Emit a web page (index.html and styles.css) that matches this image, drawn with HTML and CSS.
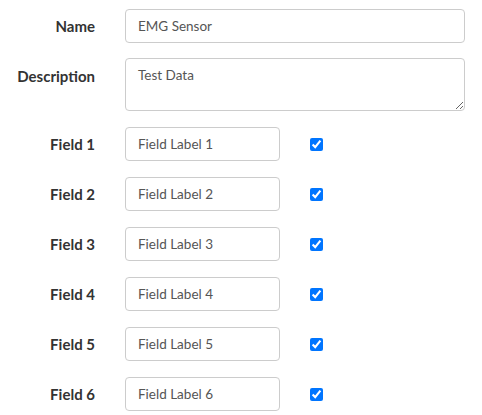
FILE: index.html
```html
<!DOCTYPE html>
<html>
<head>
<meta charset="utf-8">
<link rel="stylesheet" href="styles.css">
</head>
<body>
<form class="form">
  <div class="row">
    <label class="label">Name</label>
    <input class="input wide" type="text" value="EMG Sensor">
  </div>
  <div class="row row-top">
    <label class="label label-top">Description</label>
    <textarea class="input area">Test Data</textarea>
  </div>
  <div class="row">
    <label class="label">Field 1</label>
    <input class="input short" type="text" value="Field Label 1">
    <input class="check" type="checkbox" checked>
  </div>
  <div class="row">
    <label class="label">Field 2</label>
    <input class="input short" type="text" value="Field Label 2">
    <input class="check" type="checkbox" checked>
  </div>
  <div class="row">
    <label class="label">Field 3</label>
    <input class="input short" type="text" value="Field Label 3">
    <input class="check" type="checkbox" checked>
  </div>
  <div class="row">
    <label class="label">Field 4</label>
    <input class="input short" type="text" value="Field Label 4">
    <input class="check" type="checkbox" checked>
  </div>
  <div class="row">
    <label class="label">Field 5</label>
    <input class="input short" type="text" value="Field Label 5">
    <input class="check" type="checkbox" checked>
  </div>
  <div class="row">
    <label class="label">Field 6</label>
    <input class="input short" type="text" value="Field Label 6">
    <input class="check" type="checkbox" checked>
  </div>
</form>
</body>
</html>
```

FILE: styles.css
```css
html, body {
  margin: 0;
  padding: 0;
  background: #fff;
}
body {
  font-family: "Lato", "Noto Sans", sans-serif;
  color: #333;
}
.form {
  display: flex;
  flex-direction: column;
  gap: 16px;
  padding-top: 9px;
}
.row {
  display: flex;
  align-items: center;
}
.row-top {
  align-items: flex-start;
  margin-top: -1px;
}
.label {
  width: 95px;
  flex: none;
  text-align: right;
  font-weight: 700;
  font-size: 15px;
  margin-right: 30px;
}
.label-top {
  padding-top: 9px;
}
.input {
  box-sizing: border-box;
  height: 34px;
  border: 1px solid #ccc;
  border-radius: 4px;
  padding: 6px 12px;
  font-family: "Lato", "Noto Sans", sans-serif;
  font-size: 13.5px;
  color: #555;
  background: #fff;
  margin: 0;
  outline: none;
}
.wide {
  width: 340px;
}
.area {
  width: 340px;
  height: 53px;
  resize: vertical;
  line-height: 20px;
  display: block;
}
.short {
  width: 155px;
}
.check {
  margin: 0 0 0 30px;
  width: 13px;
  height: 13px;
}
```
